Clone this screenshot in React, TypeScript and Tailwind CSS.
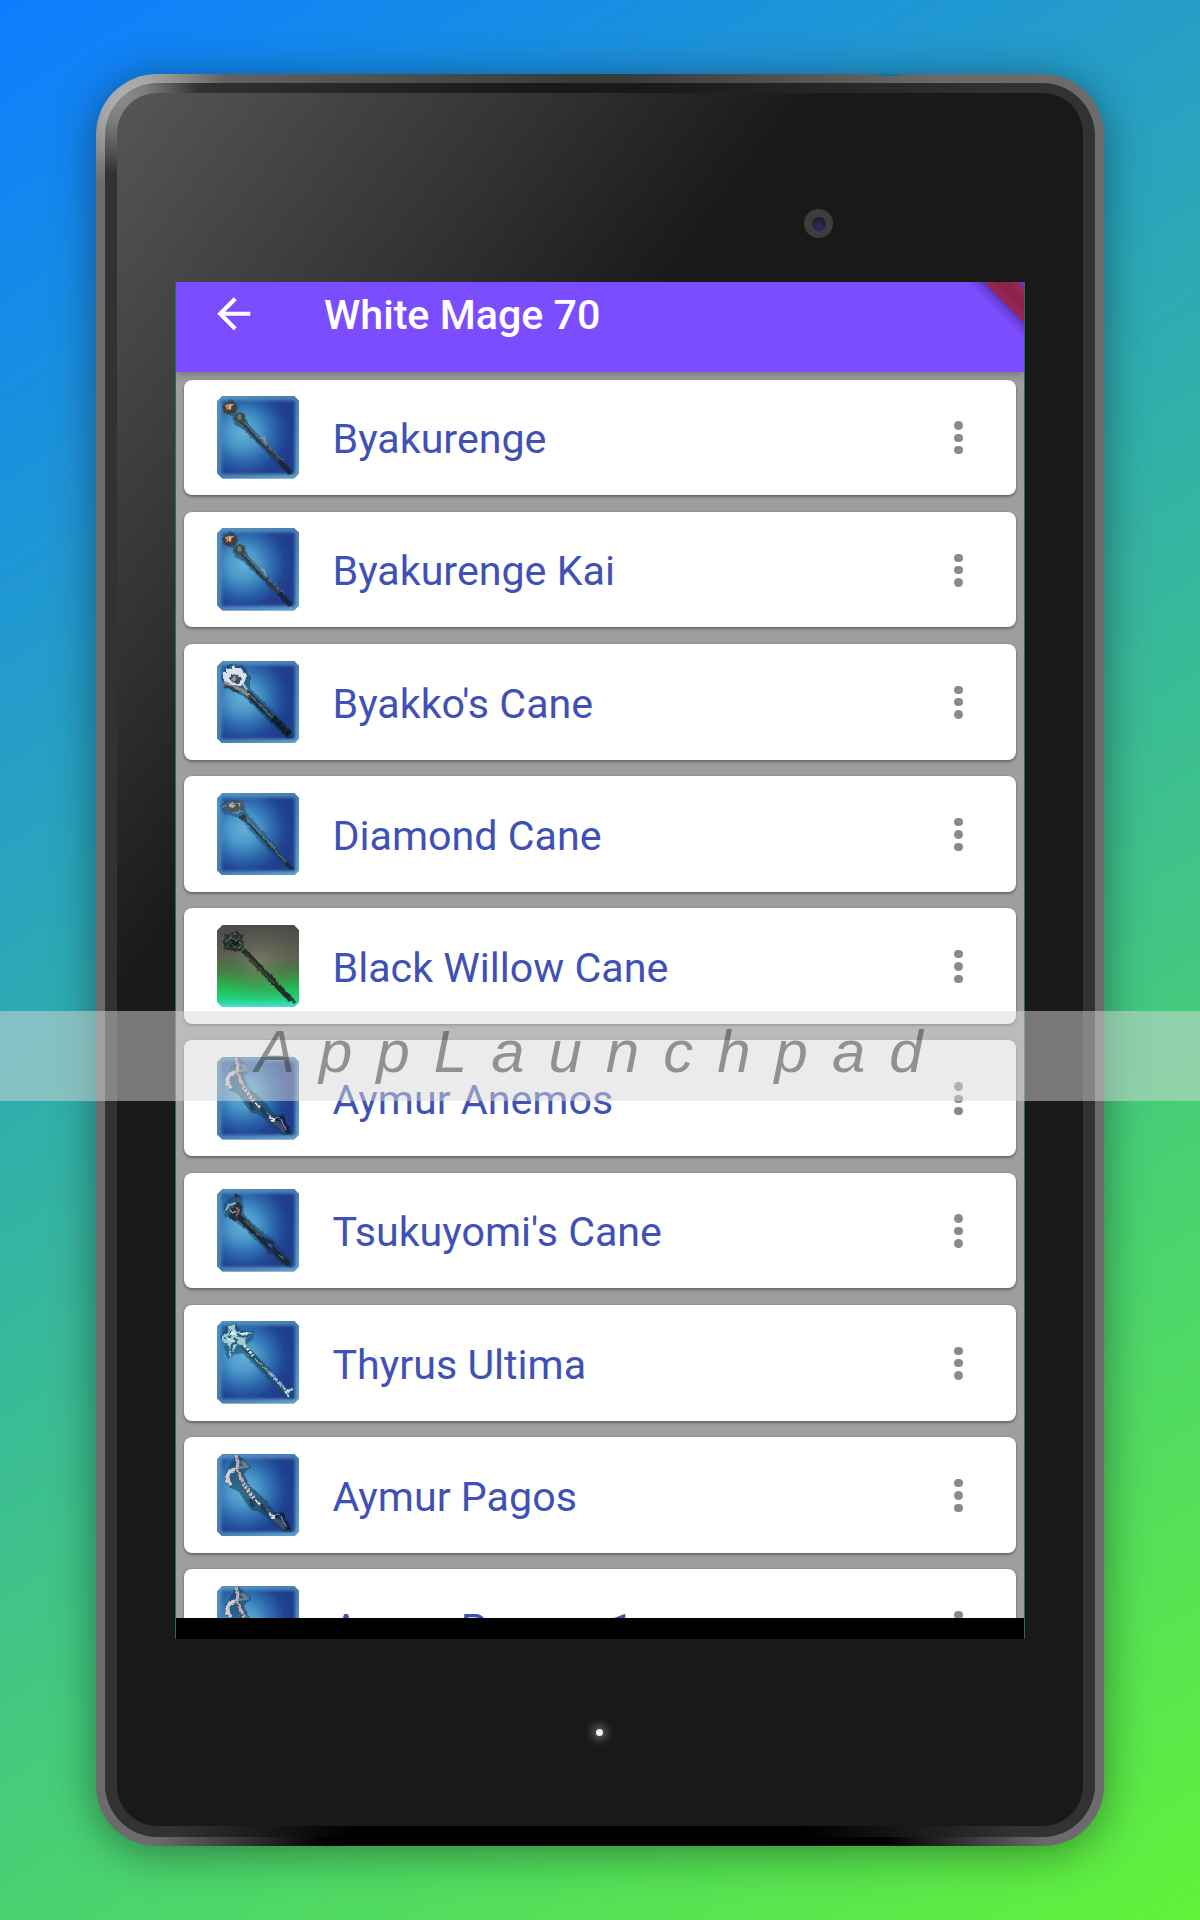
import type { ReactNode } from "react";

type IconKind = "byakurenge" | "byakko" | "diamond" | "willow" | "aymur" | "tsukuyomi" | "thyrus";

const ITEMS: { name: string; icon: IconKind }[] = [
  { name: "Byakurenge", icon: "byakurenge" },
  { name: "Byakurenge Kai", icon: "byakurenge" },
  { name: "Byakko's Cane", icon: "byakko" },
  { name: "Diamond Cane", icon: "diamond" },
  { name: "Black Willow Cane", icon: "willow" },
  { name: "Aymur Anemos", icon: "aymur" },
  { name: "Tsukuyomi's Cane", icon: "tsukuyomi" },
  { name: "Thyrus Ultima", icon: "thyrus" },
  { name: "Aymur Pagos", icon: "aymur" },
  { name: "Aymur Pagos +1", icon: "aymur" },
];

function Byakurenge() {
  return (
    <>
      <path d="M5 9 L14 3 L21 9 L20 18 L30 24 L32 32 L74 72 L76 79 L69 76 L27 34 L17 28 L16 20 L7 17Z" fill="#1d4662" opacity=".6" />
      <path d="M23 23 L73 77" stroke="#2b3b49" strokeWidth="5" />
      <path d="M27 26 L50 50" stroke="#556f72" strokeWidth="2" />
      <path d="M52 51 L68 67" stroke="#59617f" strokeWidth="2.4" strokeDasharray="4 1.5" />
      <path d="M62 65 L74 77" stroke="#17263c" strokeWidth="5" />
      <path d="M5 12 L8 6 L12 8 L16 4 L19 11 L18 17 L9 18Z" fill="#463c35" />
      <path d="M8 9 l3 -1 l1 5 l-3 1z M14 7 l2 1 l-1 6 l-3 0z" fill="#c68f68" />
      <path d="M12 8 l1 5" stroke="#e9c3a4" strokeWidth="1.3" />
      <circle cx="23" cy="22" r="5.4" fill="#3c4b47" />
      <path d="M20 20 l3 -1 l2 3 l-3 3z" fill="#70806f" />
      <path d="M43 42 l4 0 l2 6" stroke="#8da3a3" strokeWidth="1.3" fill="none" />
    </>
  );
}

function Byakko() {
  return (
    <>
      <path d="M4 17 L11 3 L26 4 L33 16 L33 27 L75 69 L77 77 L69 78 L28 36 L8 26Z" fill="#143f60" opacity=".6" />
      <path d="M28 30 L73 75" stroke="#1f2f3d" strokeWidth="6" />
      <path d="M33 34 L55 56" stroke="#51707c" strokeWidth="1.4" />
      <path d="M56 57 L73 74" stroke="#0e1b2b" strokeWidth="7" strokeDasharray="5 1" />
      <path d="M6 17 L6 11 L9 12 L9 7 L13 8 L16 4 L19 7 L24 7 L26 11 L30 13 L28 20 L24 25 L15 24 L8 22Z" fill="#dbe1eb" />
      <path d="M12 17 L15 13 L21 14 L25 18 L22 23 L15 21Z" fill="#3f4c57" />
      <path d="M15 17 l3 -3 l1 4 l-3 3z" fill="#98a0a7" />
      <path d="M7 21 L16 26 L25 29 L32 35" stroke="#8e8a84" strokeWidth="3" fill="none" />
      <path d="M9 25 L22 31" stroke="#2c3b43" strokeWidth="2" />
      <path d="M26 23 L31 30" stroke="#c6c7c5" strokeWidth="1.8" />
    </>
  );
}

function Diamond() {
  return (
    <>
      <path d="M3 13 L9 6 L26 8 L29 19 L76 73 L75 78 L66 74 L22 25 L6 20Z" fill="#174564" opacity=".5" />
      <path d="M25 22 L74 75" stroke="#24394d" strokeWidth="4" />
      <path d="M26 22 L58 56" stroke="#5c7c86" strokeWidth="1.8" />
      <path d="M58 57 L70 70" stroke="#5d6f91" strokeWidth="1.2" />
      <path d="M69 68 L78 77 L68 73Z" fill="#142c45" />
      <path d="M4 14 L10 12 L10 8 L17 9 L26 8 L28 13 L24 18 L18 19 L10 17Z" fill="#4b5759" />
      <path d="M12 11 l4 -2 l3 3 l-3 3 l-4 -1z M20 10 l4 0 l-1 4z" fill="#a9a9a5" />
      <path d="M4 14 L9 13" stroke="#8597a0" strokeWidth="1.2" />
      <path d="M16 19 L21 20 L25 18" stroke="#879399" strokeWidth="1.5" fill="none" />
      <circle cx="26" cy="24" r="3" fill="#2d3b3c" />
    </>
  );
}

function Willow() {
  return (
    <>
      <path d="M26 25 L74 75" stroke="#242d24" strokeWidth="5.5" />
      <path d="M28 29 L58 59" stroke="#434839" strokeWidth="1.6" />
      <path d="M73 72 L78 78" stroke="#1d3f30" strokeWidth="3" />
      <path d="M5 17 L8 14 L7 9 L12 10 L14 6 L17 8 L20 5 L22 9 L27 10 L25 15 L27 21 L24 26 L16 27 L11 25 L6 24 L7 20Z" fill="#2a302e" />
      <path d="M9 17 l5 -5 l5 4 l5 -4 M9 23 l5 -4 l6 4 M15 9 l1 5" stroke="#565d5a" strokeWidth="1.4" fill="none" />
      <path d="M14 14 l4 6 l4 -5 M12 21 l4 -2" stroke="#0f1515" strokeWidth="1.6" fill="none" />
      <path d="M23 18 l2 2 M21 23 l3 -1 M14 18 l2 1" stroke="#43b477" strokeWidth="1.3" />
      <path d="M17 7 l1 3" stroke="#4a7491" strokeWidth="1.2" />
    </>
  );
}

function Aymur() {
  return (
    <>
      <path d="M8 20 L14 9 L20 0 L26 5 L34 12 L27 20 L33 32 L46 43 L58 58 L68 60 L75 78 L66 78 L50 64 L42 58 L34 56 L22 38 L14 34 L8 28Z" fill="#163c58" opacity=".6" />
      <path d="M22 3 L21 17 L27 32 L37 45 L53 60 L68 74" stroke="#3f5064" strokeWidth="5" fill="none" />
      <path d="M18 15 L13 17 L10 22 L11 27 L14 31" stroke="#cfcbd1" strokeWidth="3.6" fill="none" />
      <path d="M19 1 L21 8 L20 14 L22 20 L26 28" stroke="#b9aeb9" strokeWidth="3" fill="none" />
      <path d="M22 14 L32 12 M24 8 L29 11" stroke="#6b7f8e" strokeWidth="2.8" />
      <path d="M26 29 L32 38 L37 45" stroke="#b6c7d2" strokeWidth="4" strokeDasharray="2.5 1.6" fill="none" />
      <path d="M38 46 L58 64" stroke="#eef3f7" strokeWidth="1.9" strokeDasharray="3 .8" />
      <path d="M33 45 L37 53 M44 51 L51 60" stroke="#213c56" strokeWidth="3.5" />
      <path d="M58 62 L65 61 L68 68 L72 76" stroke="#162439" strokeWidth="5" fill="none" />
      <path d="M58 61 L63 60 M64 62 L66 68 L70 73" stroke="#7485b4" strokeWidth="1.4" fill="none" />
      <path d="M54 63 l4 2" stroke="#f4f8fb" strokeWidth="2" />
    </>
  );
}

function Tsukuyomi() {
  return (
    <>
      <path d="M6 20 L10 11 L19 4 L25 8 L27 25 L35 34 L54 49 L75 72 L74 79 L64 75 L24 37 L9 27Z" fill="#143c5a" opacity=".55" />
      <path d="M22 28 L72 76" stroke="#1e2733" strokeWidth="5.5" />
      <path d="M27 31 L45 48" stroke="#4a4e56" strokeWidth="2" />
      <path d="M49 49 L57 53 L58 64 L51 61Z" fill="#1c2a58" />
      <path d="M52 55 l3 3 M62 66 l5 4" stroke="#59659a" strokeWidth="1.6" />
      <path d="M50 63 l4 2" stroke="#4b2945" strokeWidth="2" />
      <path d="M18 5 L22 6 L22 13 L25 18 L24 27 L19 32 L11 29 L12 22 L19 15Z" fill="#27303a" />
      <path d="M9 21 L12 16 L19 14" stroke="#9cb0bd" strokeWidth="2" fill="none" />
      <path d="M19 18 L22 22 L19 28" stroke="#8d6a62" strokeWidth="1.7" fill="none" />
      <path d="M13 21 l3 3 l4 -2" stroke="#a7a8ab" strokeWidth="1.3" fill="none" />
      <path d="M21 8 L20 13" stroke="#58616a" strokeWidth="1.6" />
    </>
  );
}

function Thyrus() {
  return (
    <>
      <path d="M3 16 L8 6 L19 2 L23 9 L38 10 L36 18 L29 24 L76 70 L77 78 L69 77 L26 32 L16 34 L11 40 L8 24Z" fill="#1a4d6a" opacity=".6" />
      <path d="M25 24 L73 75" stroke="#2c4d5e" strokeWidth="5" />
      <path d="M27 24 L36 35" stroke="#cde8ea" strokeWidth="3" strokeDasharray="3 1.2" />
      <path d="M38 38 L53 52" stroke="#78a2a8" strokeWidth="1.6" />
      <path d="M53 52 L72 72" stroke="#8caadb" strokeWidth="3.2" strokeDasharray="5 1" />
      <path d="M69 71 l6 -3 M72 76 l-4 -6" stroke="#b9dcee" strokeWidth="2" />
      <path d="M5 15 L11 12 L12 5 L18 3 L18 10 L24 12 L37 11 L28 18 L29 25 L20 23 L13 37 L11 24 L5 20Z" fill="#9dcbd3" />
      <path d="M14 9 l-1 7 l-6 2 M20 13 l6 3 l8 -3 M14 32 l1 -8 l5 -3 M17 17 l3 3" stroke="#315f70" strokeWidth="2.2" fill="none" />
      <path d="M13 14 l4 -3 l2 4 M9 16 l4 3 l5 0 M24 13 l7 -1" stroke="#e5f7f7" strokeWidth="1.5" fill="none" />
    </>
  );
}

const STAVES: Record<IconKind, () => ReactNode> = {
  byakurenge: Byakurenge,
  byakko: Byakko,
  diamond: Diamond,
  willow: Willow,
  aymur: Aymur,
  tsukuyomi: Tsukuyomi,
  thyrus: Thyrus,
};

function IconDefs() {
  return (
    <svg className="absolute h-0 w-0" aria-hidden="true">
      <defs>
        <radialGradient id="blueGlow" cx="0.32" cy="0.44" r="0.6">
          <stop offset="0" stopColor="#64afd6" />
          <stop offset="0.3" stopColor="#4c98c9" />
          <stop offset="0.6" stopColor="#2b68ac" />
          <stop offset="0.85" stopColor="#204492" />
          <stop offset="1" stopColor="#1f3d8c" />
        </radialGradient>
        <linearGradient id="blueEdge" x1="0" y1="0" x2="1" y2="1">
          <stop offset="0" stopColor="#5294c0" />
          <stop offset="0.5" stopColor="#4a7db4" />
          <stop offset="1" stopColor="#60a4cc" />
        </linearGradient>
        <linearGradient id="greenGlow" x1="0" y1="0" x2="0" y2="1">
          <stop offset="0" stopColor="#4c4a48" />
          <stop offset="0.35" stopColor="#5f5c52" />
          <stop offset="0.55" stopColor="#467c44" />
          <stop offset="0.75" stopColor="#25b84e" />
          <stop offset="0.9" stopColor="#1fd47d" />
          <stop offset="1" stopColor="#4edbe0" />
        </linearGradient>
        <radialGradient id="greenCenter" cx="0.52" cy="0.45" r="0.5">
          <stop offset="0" stopColor="#8d8a73" stopOpacity=".55" />
          <stop offset="1" stopColor="#5a6a50" stopOpacity="0" />
        </radialGradient>
        <filter id="soft" x="-10%" y="-10%" width="120%" height="120%">
          <feGaussianBlur stdDeviation="1.8" />
        </filter>
        <filter id="weathered" x="-5%" y="-5%" width="110%" height="110%" colorInterpolationFilters="sRGB">
          <feTurbulence type="fractalNoise" baseFrequency="0.28" numOctaves="2" seed="4" result="noise" />
          <feDisplacementMap in="SourceGraphic" in2="noise" scale="3" xChannelSelector="R" yChannelSelector="G" />
          <feGaussianBlur stdDeviation="0.7" />
        </filter>
        <clipPath id="iconClip">
          <path d="M5.5 0H77L79 2L80.500 3.500L82.500 5.500V77L77 82.500H5.500L0 77V5.500Z" />
        </clipPath>
      </defs>
    </svg>
  );
}

function ItemIcon({ kind }: { kind: IconKind }) {
  const Staff = STAVES[kind];
  return (
    <svg viewBox="0 0 82.5 82.5" className="h-[82.5px] w-[82.5px] shrink-0">
      <g clipPath="url(#iconClip)">
        {kind === "willow" ? (
          <>
            <rect width="82.5" height="82.5" fill="url(#greenGlow)" />
            <rect width="82.5" height="82.5" fill="url(#greenCenter)" />
          </>
        ) : (
          <>
            <rect width="82.5" height="82.5" fill="url(#blueGlow)" />
            <rect x="1" y="1" width="80.5" height="80.5" rx="5" fill="none" stroke="url(#blueEdge)" strokeWidth="7" filter="url(#soft)" />
          </>
        )}
        <g filter="url(#weathered)">
          <Staff />
        </g>
      </g>
    </svg>
  );
}

function MoreDots() {
  return (
    <div className="flex w-[9px] flex-col items-center gap-[4px] pt-[1px]">
      <span className="h-[8.4px] w-[8.4px] rounded-full bg-[#8a8a8a]" />
      <span className="h-[8.4px] w-[8.4px] rounded-full bg-[#8a8a8a]" />
      <span className="h-[8.4px] w-[8.4px] rounded-full bg-[#8a8a8a]" />
    </div>
  );
}

function ItemCard({ name, icon }: { name: string; icon: IconKind }) {
  return (
    <li className="flex h-[115.8px] shrink-0 items-center rounded-[8px] bg-white pr-[53px] pl-[32.5px] shadow-[0_2px_3px_rgba(0,0,0,0.32),0_0_2px_rgba(0,0,0,0.2)]">
      <ItemIcon kind={icon} />
      <span className="ml-[33.5px] flex-1 pt-[5px] text-[41.2px] leading-none whitespace-nowrap text-[#3f51b5]">{name}</span>
      <MoreDots />
    </li>
  );
}

function AppBar() {
  return (
    <header className="relative z-10 flex h-[89.5px] shrink-0 items-start bg-[#7c4dff] shadow-[0_2px_8px_rgba(0,0,0,0.3)]">
      <svg viewBox="0 0 24 24" className="mt-[7px] ml-[33px] h-[49.5px] w-[49.5px] shrink-0" fill="#fff">
        <path d="M20 11H7.83l5.59-5.59L12 4l-8 8 8 8 1.41-1.41L7.83 13H20v-2z" />
      </svg>
      <h1 className="mt-[9px] ml-[65.5px] text-[41.2px] leading-[48px] font-medium whitespace-nowrap text-white">White Mage 70</h1>
      <svg viewBox="0 0 70 70" className="absolute top-0 right-0 h-[70px] w-[70px]">
        <defs>
          <linearGradient id="ribbonShade" gradientUnits="userSpaceOnUse" x1="50.75" y1="19.25" x2="41" y2="29">
            <stop offset="0" stopColor="#1a0a40" stopOpacity=".42" />
            <stop offset="0.4" stopColor="#1a0a40" stopOpacity=".18" />
            <stop offset="1" stopColor="#1a0a40" stopOpacity="0" />
          </linearGradient>
          <linearGradient id="ribbon" gradientUnits="userSpaceOnUse" x1="50" y1="20" x2="67" y2="3">
            <stop offset="0" stopColor="#97285a" />
            <stop offset="0.5" stopColor="#8c2245" />
            <stop offset="1" stopColor="#97285a" />
          </linearGradient>
        </defs>
        <path d="M0 0H70V70Z" fill="url(#ribbonShade)" />
        <path d="M29.500 0H64.500L70 5.500V40.500Z" fill="url(#ribbon)" />
        <path d="M64.500 0H70V5.500Z" fill="#5d40c0" />
      </svg>
    </header>
  );
}

function Screen() {
  return (
    <div className="flex h-[1357px] w-[850px] flex-col overflow-hidden border-x border-[#2f6660] bg-black">
      <AppBar />
      <ul className="flex min-h-0 flex-1 flex-col gap-[16.4px] overflow-hidden bg-[#9e9e9e] px-[8px] pt-[8px]">
        {ITEMS.map((item) => (
          <ItemCard key={item.name} name={item.name} icon={item.icon} />
        ))}
      </ul>
      <div className="h-[21.5px] shrink-0 bg-black" />
    </div>
  );
}

function Tablet() {
  return (
    <div className="relative h-[1771.5px] w-[1007.5px] rounded-[61px] bg-[radial-gradient(circle_at_30px_25px,#b0b0b0_0,#a4a4a4_30px,rgba(107,107,107,0)_100px),linear-gradient(90deg,#6b6b6b_50px,#3a3a3a_480px,#3a3a3a_530px,#6b6b6b_850px)] bg-[#6b6b6b] p-[9px] shadow-[0_6px_44px_rgba(0,0,0,0.42)]">
      <div className="absolute inset-x-0 top-[75px] bottom-[75px] bg-[linear-gradient(180deg,rgba(107,107,107,0),#6b6b6b_50px)]" />
      <div className="absolute inset-x-0 bottom-0 h-[80px] rounded-b-[61px] bg-[linear-gradient(90deg,#6b6b6b_60px,#000_230px,#000_790px,#6b6b6b_950px)]" />
      <div className="relative h-full rounded-[53px] bg-[radial-gradient(circle_at_18px_16px,#8a8a8a_0,#7c7c7c_25px,rgba(50,50,50,0)_76px),linear-gradient(180deg,transparent_60px,#323232_90px,#323232_1680px,transparent_1690px),linear-gradient(90deg,#323232_80px,#191919_430px,#191919_530px,#323232_900px)] bg-[#323232] px-[11.5px] pt-[10px] pb-[11px]">
        <div className="absolute inset-x-0 bottom-0 h-[70px] rounded-b-[53px] bg-[linear-gradient(90deg,#323232_70px,#000_250px,#000_700px,#323232_910px)]" />
        <div className="relative flex h-full flex-col items-center rounded-[40px] bg-[linear-gradient(127.4deg,#565656_0,#4d4d4d_90px,#333333_335px,#191919_556px)] pt-[189px]">
          <div className="absolute top-[116px] left-[687.500px] flex h-[29px] w-[29px] items-center justify-center rounded-full bg-[#3d3d3d]">
            <div className="h-[14px] w-[14px] rounded-full bg-[radial-gradient(circle_at_50%_70%,#252858_25%,#202024_70%)]" />
          </div>
          <Screen />
          <div className="mt-[90px] mr-px h-[7px] w-[7px] rounded-full bg-[#f0f0f0] shadow-[0_0_8px_4px_rgba(200,200,200,0.4)]" />
        </div>
      </div>
      <div className="absolute top-0 left-[781px] h-[1.5px] w-[22px] rounded-b-full bg-[#176f96]" />
    </div>
  );
}

function Watermark() {
  return (
    <div className="absolute inset-x-0 top-[1011px] flex h-[90px] items-start bg-[#d7d7d7]/50 pl-[255px]">
      <span className="mt-[7px] font-['Liberation_Sans',Arial,sans-serif] text-[60px] leading-[68px] tracking-[24px] whitespace-nowrap text-[#282420]/45 italic">
        AppLaunchpad
      </span>
    </div>
  );
}

export default function App() {
  return (
    <main className="relative flex h-[1920px] w-[1200px] justify-center overflow-hidden bg-[linear-gradient(148deg,#0d7dff,#61f23a)] pt-[74px] font-[Roboto,sans-serif]">
      <IconDefs />
      <Tablet />
      <Watermark />
    </main>
  );
}
